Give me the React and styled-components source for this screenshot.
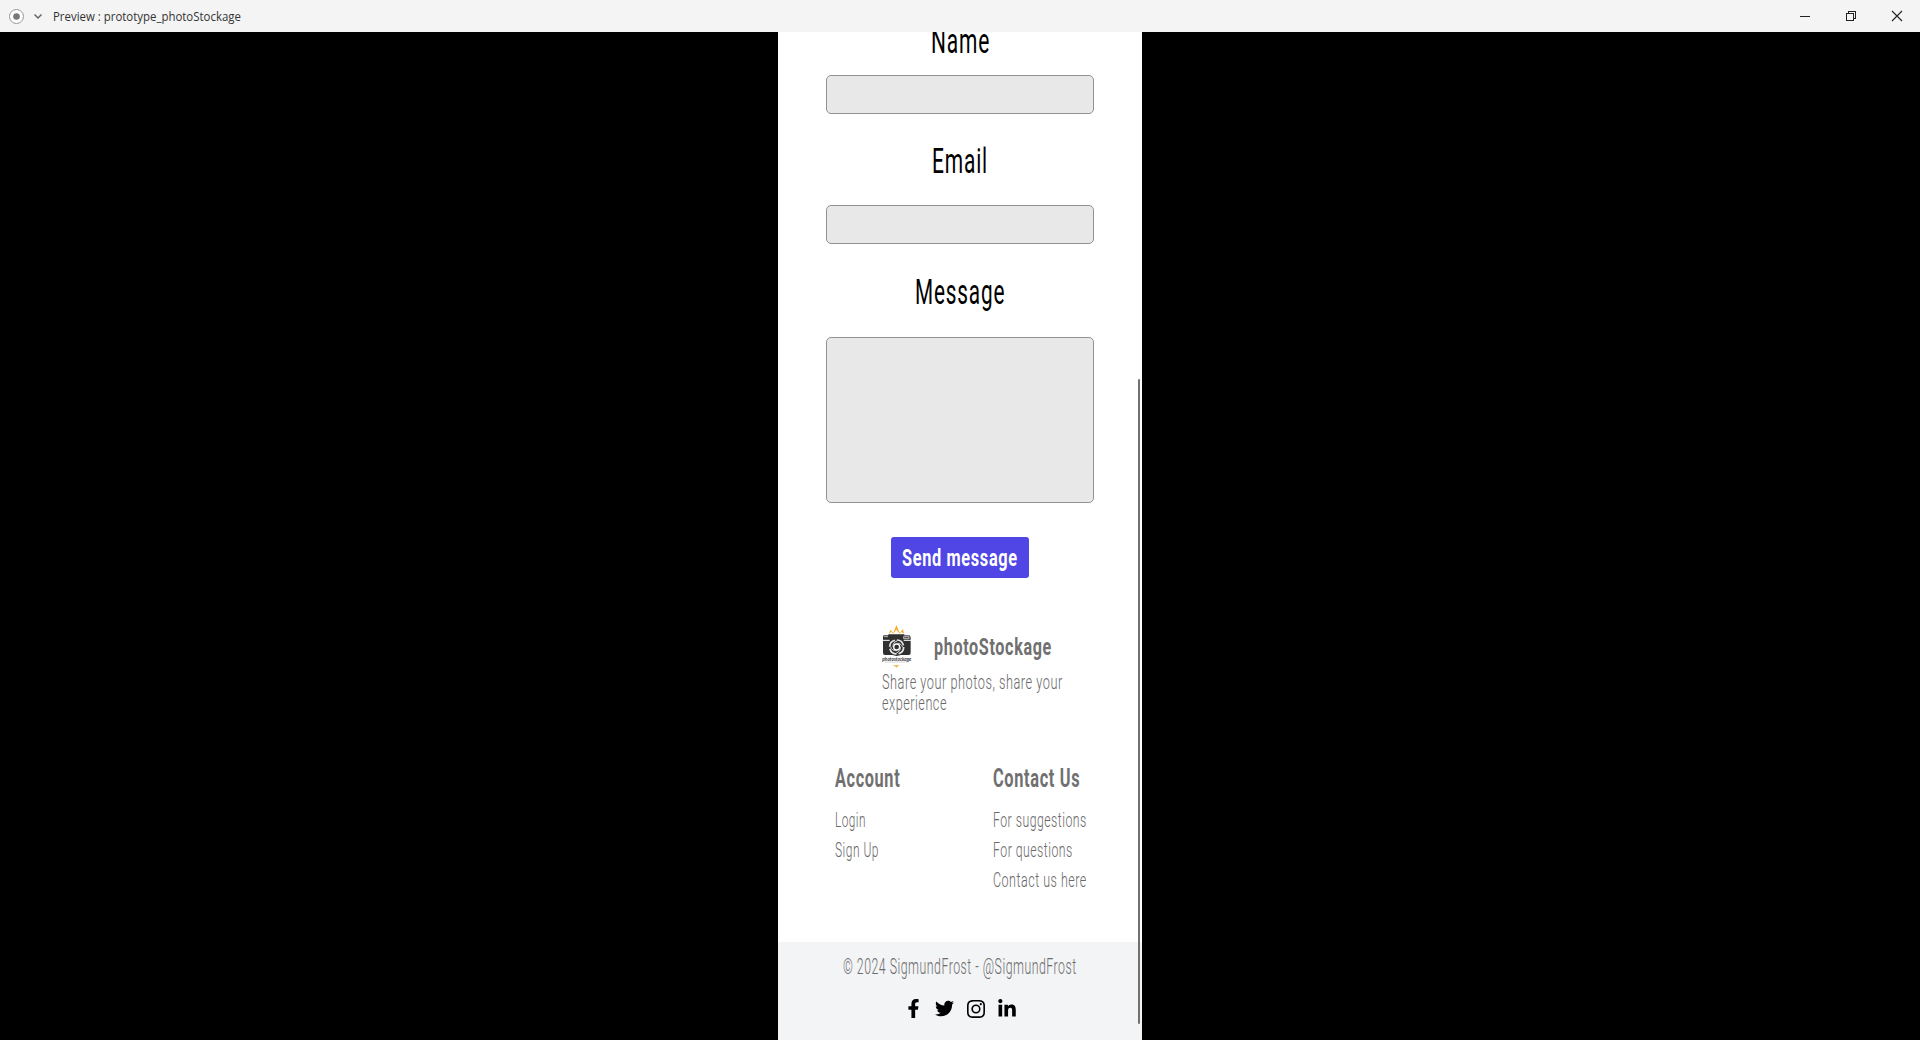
import React, { useLayoutEffect, useRef, useState } from 'react';
import styled, { createGlobalStyle } from 'styled-components';
import { FaFacebookF, FaTwitter, FaLinkedinIn } from 'react-icons/fa';
import { BsInstagram } from 'react-icons/bs';

const GlobalStyle = createGlobalStyle`
  * { box-sizing: border-box; }
  body { margin: 0; background: #000; overflow: hidden; }
`;

const Window = styled.div`
  display: flex;
  flex-direction: column;
  width: 1920px;
  height: 1040px;
  background: #000;
  font-family: Roboto, "Liberation Sans", sans-serif;
`;

const TitleBar = styled.header`
  display: flex;
  align-items: center;
  flex: none;
  height: 32px;
  padding: 0 15px 0 8px;
  background: #f4f4f4;
  color: #333;
  font-family: "Open Sans", "Noto Sans", sans-serif;
`;

const TitleText = styled.div`
  padding: 2px 0 0 0.5px;
`;

const WindowControls = styled.div`
  display: flex;
  gap: 30px;
  margin-left: auto;
`;

const Stage = styled.main`
  display: flex;
  justify-content: center;
  flex: 1;
  min-height: 0;
`;

const Phone = styled.div`
  display: flex;
  width: 364px;
  background: #fff;
  overflow: hidden;
  position: relative;
`;

const Page = styled.div`
  display: flex;
  flex-direction: column;
  width: 364px;
  height: 1020px;
  margin-top: -11px;
`;

const ScrollThumb = styled.div`
  position: absolute;
  top: 347px;
  right: 2px;
  width: 2px;
  height: 645px;
  border-radius: 1px;
  background: #707070;
`;

const Form = styled.form`
  display: flex;
  flex-direction: column;
  align-items: center;
`;

const Label = styled.label`
  height: 40px;
  margin-top: ${(p) => p.$gap || 0}px;
  color: #000;
`;

const Field = styled.div`
  width: 268px;
  height: ${(p) => p.$height}px;
  margin-top: ${(p) => p.$gap}px;
  border: 1px solid #929292;
  border-radius: 5px;
  background: #e8e8e8;
`;

const SendButton = styled.div`
  display: flex;
  justify-content: center;
  width: 138px;
  height: 41px;
  margin-top: 34px;
  padding-top: 6px;
  border-radius: 3px;
  background: #4f46e5;
  color: #fff;
`;

const Brand = styled.section`
  margin: 46px 0 0 103.5px;
  color: #707070;
`;

const BrandRow = styled.div`
  display: flex;
  gap: 22px;
  height: 48px;
`;

const BrandName = styled.div`
  padding-top: 8px;
`;

const Columns = styled.section`
  display: flex;
  height: 178px;
  margin-top: 49px;
  padding-left: 57px;
  color: #707070;
`;

const Column = styled.nav`
  width: ${(p) => p.$width}px;
`;

const Links = styled.div`
  margin-top: 11px;
  color: #686868;
`;

const Tagline = styled.div`
  color: #686868;
`;

const Footer = styled.footer`
  flex: 1;
  padding-top: 10px;
  background: #f3f4f6;
  color: #6c6c6c;
`;

const Copyright = styled.div`
  display: flex;
  justify-content: center;
  height: 30px;
`;

const Socials = styled.div`
  display: flex;
  height: 22px;
  margin-top: 16px;
  padding-left: 120px;
  color: #000;
`;

const Social = styled.span`
  display: flex;
  align-items: center;
  justify-content: center;
  width: 31px;
`;

const FitBox = styled.span`
  display: block;
  width: ${(p) => p.$width}px;
  height: ${(p) => p.$line}px;
  line-height: ${(p) => p.$line}px;
  font-size: ${(p) => p.$size}px;
  font-weight: ${(p) => p.$weight};
  letter-spacing: ${(p) => p.$spacing}em;
  white-space: nowrap;
`;

const FitInner = styled.span`
  display: inline-block;
  transform-origin: 0 50%;
`;

// Condenses one line of text horizontally to the given width.
function Fit({ width, size, line = 30, weight = 300, spacing = 0.04, children }) {
  const ref = useRef(null);
  const [scale, setScale] = useState(1);
  useLayoutEffect(() => {
    const measure = () => setScale(width / ref.current.offsetWidth);
    measure();
    document.fonts.ready.then(measure);
  }, [width, size, weight, spacing]);
  return (
    <FitBox $width={width} $size={size} $line={line} $weight={weight} $spacing={spacing}>
      <FitInner ref={ref} style={{ transform: `scaleX(${scale})` }}>{children}</FitInner>
    </FitBox>
  );
}

const TitleMark = () => (
  <svg width="44" height="32" viewBox="0 0 44 32">
    <circle cx="8.5" cy="16.5" r="7" fill="#fff" stroke="#999" />
    <circle cx="8.5" cy="16.5" r="3.3" fill="#777" />
    <path d="M26.5 14.5l3.5 3.5 3.5-3.5" fill="none" stroke="#666" strokeWidth="1.5" />
  </svg>
);

const Logo = () => (
  <svg width="30" height="44" viewBox="0 0 90 132">
    <path d="M21 29L25 17l9 10L43 3l10 24 10-12 3 14-8-5-5 5-10-12-9 12-6-5z" fill="#f7ac30" />
    <path d="M5 34h14v-3h48v3h15q4 2 4 7v46q0 6-6 6H9q-6 0-6-6V40q0-5 2-6z" fill="#303030" />
    <path d="M1 49h22M65 49h22" stroke="#fff" strokeWidth="3" />
    <path d="M6 38h12M65 37h16v7H65z" stroke="#bbb" strokeWidth="3" fill="#555" />
    <circle cx="44" cy="69" r="27" fill="#303030" />
    <circle cx="44" cy="69" r="21" fill="none" stroke="#e5e5e5" strokeWidth="5" strokeDasharray="27 6" />
    <circle cx="44" cy="69" r="9" fill="none" stroke="#fff" strokeWidth="4" />
    <path d="M33 69q-1-14 12-18M44 58q14-1 18 12M55 69q1 13-12 18M44 80q-14 1-18-12" fill="none" stroke="#ddd" strokeWidth="3" />
    <text x="1" y="110" textLength="87" lengthAdjust="spacingAndGlyphs" fontFamily="Lato, sans-serif" fontSize="15" fontWeight="700" fontStyle="italic" fill="#333">photostockage</text>
    <path d="M8 114h72" stroke="#aaa" strokeWidth="2" strokeDasharray="5 2" />
    <path d="M32 124h22l-7 3-4 4-4-4z" fill="#f7ac30" />
  </svg>
);

const MinimizeIcon = () => (
  <svg width="16" height="16" viewBox="0 0 16 16" shapeRendering="crispEdges">
    <path d="M3 8.5h10" stroke="#222" />
  </svg>
);

const RestoreIcon = () => (
  <svg width="16" height="16" viewBox="0 0 16 16" fill="none" stroke="#222" shapeRendering="crispEdges">
    <path d="M3.5 5.5h7v7h-7zM5.500 5.500v-2h7v7h-2" />
  </svg>
);

const CloseIcon = () => (
  <svg width="16" height="16" viewBox="0 0 16 16">
    <path d="M3 3l10 10M13 3L3 13" stroke="#222" strokeWidth="1.1" />
  </svg>
);

export default function App() {
  return (
    <Window>
      <GlobalStyle />
      <TitleBar>
        <TitleMark />
        <TitleText>
          <Fit width={187.500} size={12} line={30} weight={400} spacing={0}>Preview : prototype_photoStockage</Fit>
        </TitleText>
        <WindowControls>
          <MinimizeIcon />
          <RestoreIcon />
          <CloseIcon />
        </WindowControls>
      </TitleBar>
      <Stage>
        <Phone>
          <Page>
            <Form>
              <Label><Fit width={59} size={35.500} line={40} weight={400}>Name</Fit></Label>
              <Field $height={39} $gap={14} />
              <Label $gap={27}><Fit width={56} size={35.500} line={40} weight={400}>Email</Fit></Label>
              <Field $height={39} $gap={24} />
              <Label $gap={28}><Fit width={90} size={35.500} line={40} weight={400}>Message</Fit></Label>
              <Field $height={166} $gap={25} />
              <SendButton><Fit width={116} size={24.500} weight={700}>Send message</Fit></SendButton>
            </Form>
            <Brand>
              <BrandRow>
                <Logo />
                <BrandName><Fit width={118} size={24.500} weight={700}>photoStockage</Fit></BrandName>
              </BrandRow>
              <Tagline>
                <Fit width={180.500} size={21} line={21.400}>Share your photos, share your</Fit>
                <Fit width={65} size={21} line={21.400}>experience</Fit>
              </Tagline>
            </Brand>
            <Columns>
              <Column $width={157.500}>
                <Fit width={65} size={25} weight={700}>Account</Fit>
                <Links>
                  <Fit width={31} size={21}>Login</Fit>
                  <Fit width={44} size={21}>Sign Up</Fit>
                </Links>
              </Column>
              <Column $width={120}>
                <Fit width={87} size={25} weight={700}>Contact Us</Fit>
                <Links>
                  <Fit width={94} size={21}>For suggestions</Fit>
                  <Fit width={80} size={21}>For questions</Fit>
                  <Fit width={94} size={21}>Contact us here</Fit>
                </Links>
              </Column>
            </Columns>
            <Footer>
              <Copyright><Fit width={234} size={21.500}>© 2024 SigmundFrost - @SigmundFrost</Fit></Copyright>
              <Socials>
                <Social><FaFacebookF size={19} /></Social>
                <Social><FaTwitter size={19} /></Social>
                <Social><BsInstagram size={18} /></Social>
                <Social><FaLinkedinIn size={20} /></Social>
              </Socials>
            </Footer>
          </Page>
          <ScrollThumb />
        </Phone>
      </Stage>
    </Window>
  );
}
